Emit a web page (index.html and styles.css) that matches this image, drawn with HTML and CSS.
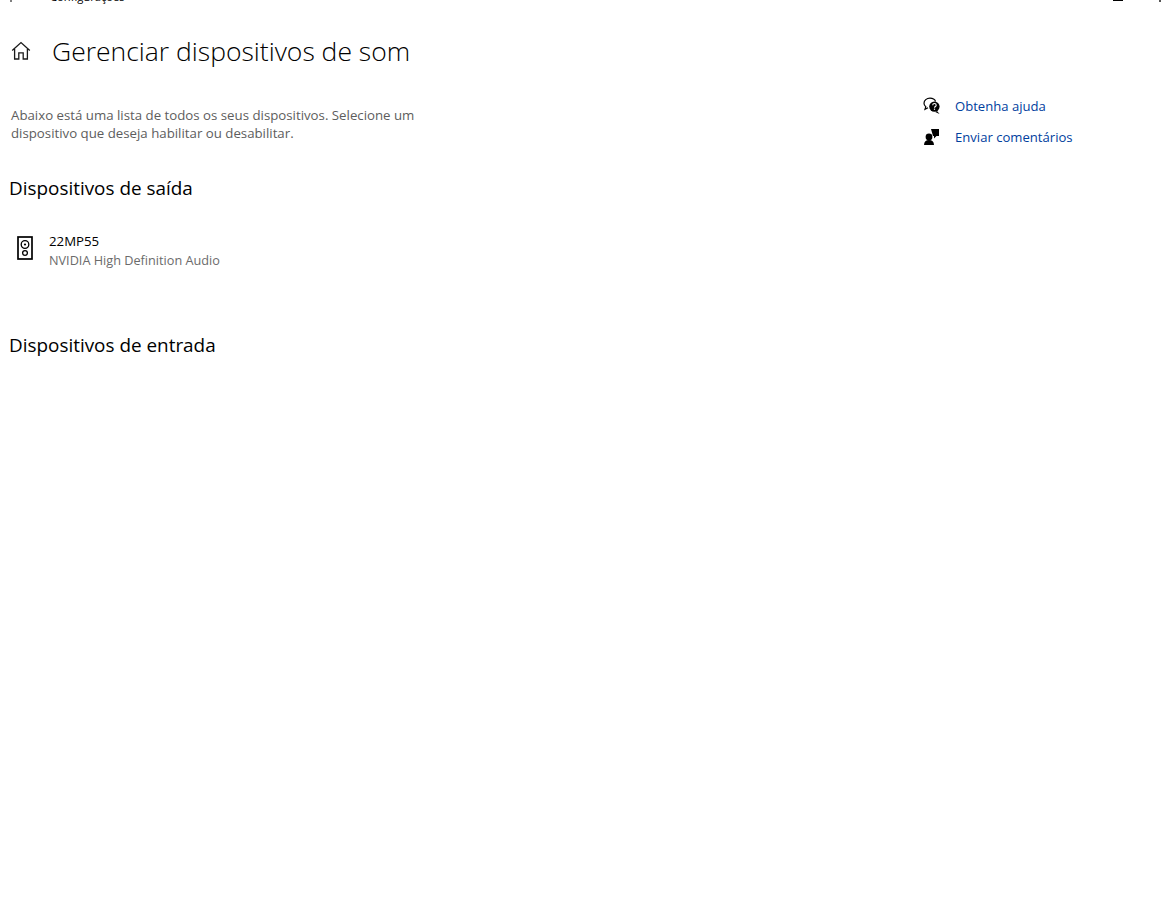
FILE: index.html
```html
<!DOCTYPE html>
<html lang="pt-BR">
<head>
    <meta charset="UTF-8">
    <meta name="viewport" content="width=device-width, initial-scale=1.0">
    <title>Gerenciar dispositivos de som</title>
    <link rel="stylesheet" href="styles.css">
</head>
<body>
    <header class="titlebar">
        <div class="titlebar-left">
            <svg class="back-icon" width="10" height="10" viewBox="0 0 10 10"><path d="M5 0v10M1 5l4-4 4 4" fill="none" stroke="#000" stroke-width="1"/></svg>
            <span class="app-name">Configurações</span>
        </div>
        <div class="window-controls">
            <span class="win-min"></span>
            <span class="win-close"></span>
        </div>
    </header>

    <div class="page">
        <main class="content">
            <div class="page-title">
                <svg class="home-icon" width="20" height="20" viewBox="0 0 20 20">
                    <path d="M1.2 9.6 10 1.6l8.800 8M3.600 8v10h4.200v-6.200h4.400V18h4.200V8" fill="none" stroke="#1a1a1a" stroke-width="1.3"/>
                </svg>
                <h1>Gerenciar dispositivos de som</h1>
            </div>

            <p class="intro">Abaixo está uma lista de todos os seus dispositivos. Selecione um dispositivo que deseja habilitar ou desabilitar.</p>

            <h2 class="section-title">Dispositivos de saída</h2>
            <div class="device">
                <svg class="device-icon" width="16" height="24" viewBox="0 0 16 24">
                    <rect x="1" y="1" width="14" height="22" fill="none" stroke="#000" stroke-width="1.700"/>
                    <circle cx="8" cy="8.500" r="3.800" fill="none" stroke="#000" stroke-width="1.300"/>
                    <circle cx="8" cy="8.500" r="1.100" fill="#000"/>
                    <circle cx="8" cy="17" r="2.400" fill="none" stroke="#000" stroke-width="1.300"/>
                </svg>
                <div class="device-text">
                    <div class="device-name">22MP55</div>
                    <div class="device-driver">NVIDIA High Definition Audio</div>
                </div>
            </div>

            <h2 class="section-title section-input">Dispositivos de entrada</h2>
        </main>

        <aside class="help">
            <a class="help-link" href="#">
                <svg width="18" height="18" viewBox="0 0 18 18">
                    <path d="M7 1.200C3.600 1.200 1 3.400 1 6.200c0 1.400.7 2.700 1.800 3.600L2 12.400l3-1.600" fill="none" stroke="#000" stroke-width="1.200"/>
                    <path d="M7 1.200c2.600 0 4.800 1.300 5.600 3.200" fill="none" stroke="#000" stroke-width="1.200"/>
                    <circle cx="11.400" cy="9.600" r="5.200" fill="#000"/>
                    <path d="m14 14 2.600 3-4.400-2z" fill="#000"/>
                    <path d="M9.700 8.200c0-2.200 3.500-2.200 3.500 0 0 1.300-1.700 1.300-1.700 2.600" fill="none" stroke="#fff" stroke-width="1.100"/>
                    <rect x="10.900" y="11.600" width="1.200" height="1.200" fill="#fff"/>
                </svg>
                <span>Obtenha ajuda</span>
            </a>
            <a class="help-link" href="#">
                <svg width="18" height="18" viewBox="0 0 18 18">
                    <path d="M8 1h8v7h-2.500l-2.500 2.400V8H10z" fill="#000"/>
                    <circle cx="6" cy="9" r="3.400" fill="#000"/>
                    <path d="M1 17c0-3.200 2-5 5-5s5 1.800 5 5z" fill="#000"/>
                </svg>
                <span>Enviar comentários</span>
            </a>
        </aside>
    </div>
</body>
</html>
```

FILE: styles.css
```css
html, body {
    height: 100%;
}
body {
    font-family: "Open Sans", "Noto Sans", sans-serif;
    margin: 0;
    background: white;
    color: #000;
    overflow: hidden;
}
.titlebar {
    display: flex;
    justify-content: space-between;
    height: 20px;
    margin-top: -13px;
    font-size: 11.2px;
    line-height: 20px;
}
.titlebar-left {
    display: flex;
    align-items: center;
}
.back-icon {
    margin-left: 6px;
}
.app-name {
    margin-left: 34px;
}
.window-controls {
    display: flex;
    height: 20px;
    padding-top: 13px;
    padding-right: 5px;
    gap: 36px;
}
.win-min {
    width: 10px;
    height: 1px;
    background: #000;
}
.win-close {
    width: 2px;
    height: 2px;
    background: #555;
}
.page {
    display: flex;
    justify-content: space-between;
}
.content {
    padding-left: 9px;
}
.page-title {
    display: flex;
    align-items: center;
    margin-top: 26px;
    height: 36px;
}
.home-icon {
    margin-left: 2px;
}
h1 {
    font-size: 26.5px;
    font-weight: 300;
    margin: 0 0 0 21px;
    line-height: 36px;
}
.intro {
    width: 420px;
    margin: 37px 0 0 2px;
    font-size: 13.25px;
    line-height: 18px;
    color: #5d5d5d;
}
.section-title {
    font-size: 18.9px;
    font-weight: 400;
    margin: 0;
    line-height: 26px;
}
.intro + .section-title {
    margin-top: 33px;
}
.section-input {
    margin-top: 63px;
}
.device {
    display: flex;
    margin-top: 32px;
    margin-left: 8px;
}
.device-icon {
    margin-top: 3px;
}
.device-text {
    margin-left: 16px;
    margin-top: -2px;
}
.device-name {
    font-size: 13.25px;
    line-height: 20px;
}
.device-driver {
    font-size: 12.7px;
    line-height: 18px;
    color: #6b6b6b;
}
.help {
    width: 243px;
    padding-top: 83px;
}
.help-link {
    display: flex;
    align-items: center;
    height: 31px;
    color: #00409e;
    text-decoration: none;
    font-size: 13.1px;
}
.help-link span {
    margin-left: 14px;
}
```
